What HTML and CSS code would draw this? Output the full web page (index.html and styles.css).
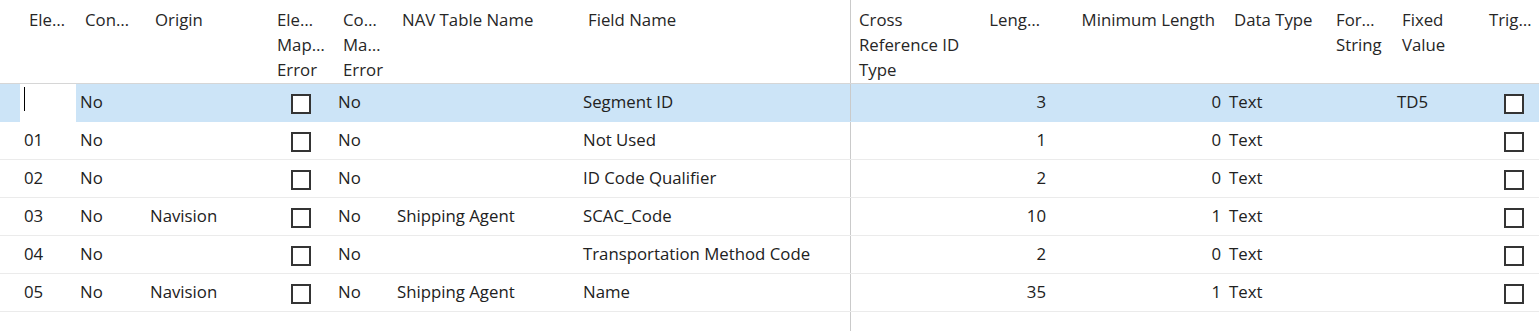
FILE: index.html
```html
<!DOCTYPE html>
<html>
<head>
<meta charset="utf-8">
<link rel="stylesheet" href="styles.css">
</head>
<body>
<div class="grid">
  <div class="head">
    <div class="c"></div>
    <div class="c"><span>Ele…</span></div>
    <div class="c"><span>Con…</span></div>
    <div class="c"><span>Origin</span></div>
    <div class="c"><span>Ele…</span><span>Map…</span><span>Error</span></div>
    <div class="c"><span>Co…</span><span>Ma…</span><span>Error</span></div>
    <div class="c"><span>NAV Table Name</span></div>
    <div class="c"><span>Field Name</span></div>
    <div class="c split"><span>Cross</span><span>Reference ID</span><span>Type</span></div>
    <div class="c num"><span>Leng…</span></div>
    <div class="c num"><span>Minimum Length</span></div>
    <div class="c"><span>Data Type</span></div>
    <div class="c"><span>For…</span><span>String</span></div>
    <div class="c"><span>Fixed</span><span>Value</span></div>
    <div class="c"><span>Trig…</span></div>
  </div>

  <div class="row sel">
    <div class="c"></div>
    <div class="c edit"><span class="caret"></span></div>
    <div class="c">No</div>
    <div class="c"></div>
    <div class="c chk"><span class="cb"></span></div>
    <div class="c">No</div>
    <div class="c"></div>
    <div class="c">Segment ID</div>
    <div class="c split"></div>
    <div class="c num">3</div>
    <div class="c num">0</div>
    <div class="c">Text</div>
    <div class="c"></div>
    <div class="c">TD5</div>
    <div class="c chk"><span class="cb"></span></div>
  </div>

  <div class="row">
    <div class="c"></div>
    <div class="c">01</div>
    <div class="c">No</div>
    <div class="c"></div>
    <div class="c chk"><span class="cb"></span></div>
    <div class="c">No</div>
    <div class="c"></div>
    <div class="c">Not Used</div>
    <div class="c split"></div>
    <div class="c num">1</div>
    <div class="c num">0</div>
    <div class="c">Text</div>
    <div class="c"></div>
    <div class="c"></div>
    <div class="c chk"><span class="cb"></span></div>
  </div>

  <div class="row">
    <div class="c"></div>
    <div class="c">02</div>
    <div class="c">No</div>
    <div class="c"></div>
    <div class="c chk"><span class="cb"></span></div>
    <div class="c">No</div>
    <div class="c"></div>
    <div class="c">ID Code Qualifier</div>
    <div class="c split"></div>
    <div class="c num">2</div>
    <div class="c num">0</div>
    <div class="c">Text</div>
    <div class="c"></div>
    <div class="c"></div>
    <div class="c chk"><span class="cb"></span></div>
  </div>

  <div class="row">
    <div class="c"></div>
    <div class="c">03</div>
    <div class="c">No</div>
    <div class="c">Navision</div>
    <div class="c chk"><span class="cb"></span></div>
    <div class="c">No</div>
    <div class="c">Shipping Agent</div>
    <div class="c">SCAC_Code</div>
    <div class="c split"></div>
    <div class="c num">10</div>
    <div class="c num">1</div>
    <div class="c">Text</div>
    <div class="c"></div>
    <div class="c"></div>
    <div class="c chk"><span class="cb"></span></div>
  </div>

  <div class="row">
    <div class="c"></div>
    <div class="c">04</div>
    <div class="c">No</div>
    <div class="c"></div>
    <div class="c chk"><span class="cb"></span></div>
    <div class="c">No</div>
    <div class="c"></div>
    <div class="c">Transportation Method Code</div>
    <div class="c split"></div>
    <div class="c num">2</div>
    <div class="c num">0</div>
    <div class="c">Text</div>
    <div class="c"></div>
    <div class="c"></div>
    <div class="c chk"><span class="cb"></span></div>
  </div>

  <div class="row">
    <div class="c"></div>
    <div class="c">05</div>
    <div class="c">No</div>
    <div class="c">Navision</div>
    <div class="c chk"><span class="cb"></span></div>
    <div class="c">No</div>
    <div class="c">Shipping Agent</div>
    <div class="c">Name</div>
    <div class="c split"></div>
    <div class="c num">35</div>
    <div class="c num">1</div>
    <div class="c">Text</div>
    <div class="c"></div>
    <div class="c"></div>
    <div class="c chk"><span class="cb"></span></div>
  </div>

  <div class="fill">
    <div></div>
    <div class="split"></div>
  </div>
</div>
</body>
</html>
```

FILE: styles.css
```css
html, body {
  margin: 0;
  padding: 0;
  background: #ffffff;
  overflow: hidden;
}

body {
  font-family: "Open Sans", "Noto Sans", sans-serif;
  font-size: 16.8px;
  color: #212121;
}

.grid {
  display: flex;
  flex-direction: column;
  width: 1548px;
  height: 331px;
}

.head,
.row {
  display: grid;
  grid-template-columns: 20px 56px 70px 122px 66px 59px 186px 271px 133px 67px 175px 102px 66px 87px 68px;
  box-sizing: border-box;
}

.head {
  height: 84px;
  border-bottom: 1px solid #d6d6d6;
}

.head .c {
  padding: 7px 0 0 9px;
  line-height: 25px;
  white-space: nowrap;
  overflow: hidden;
  color: #262626;
}

.head .c span {
  display: block;
}

.head .c.split {
  padding-left: 8px;
}

.head .c.num {
  text-align: right;
  padding-left: 0;
  padding-right: 10px;
}

.row {
  height: 38px;
  border-bottom: 1px solid #ebebeb;
}

.row .c {
  padding-left: 4px;
  line-height: 35px;
  white-space: nowrap;
  overflow: hidden;
}

.row .c.num {
  text-align: right;
  padding-left: 0;
  padding-right: 4px;
}

.split {
  border-left: 1px solid #cacaca;
}

.row.sel {
  background: #cce4f7;
  border-bottom-color: #cce4f7;
}

.row.sel .edit {
  background: #ffffff;
  display: flex;
  align-items: flex-start;
  padding-left: 4px;
  padding-top: 3px;
  margin-bottom: -1px;
}

.caret {
  display: block;
  width: 1px;
  height: 24px;
  background: #000000;
}

.row .c.chk {
  display: flex;
  justify-content: center;
  align-items: center;
  padding: 3px 0 0 0;
}

.cb {
  display: block;
  width: 20px;
  height: 20px;
  box-sizing: border-box;
  border: 2px solid #343434;
  background: #ffffff;
}

.fill {
  flex: 1;
  display: grid;
  grid-template-columns: 850px 1fr;
}
```
